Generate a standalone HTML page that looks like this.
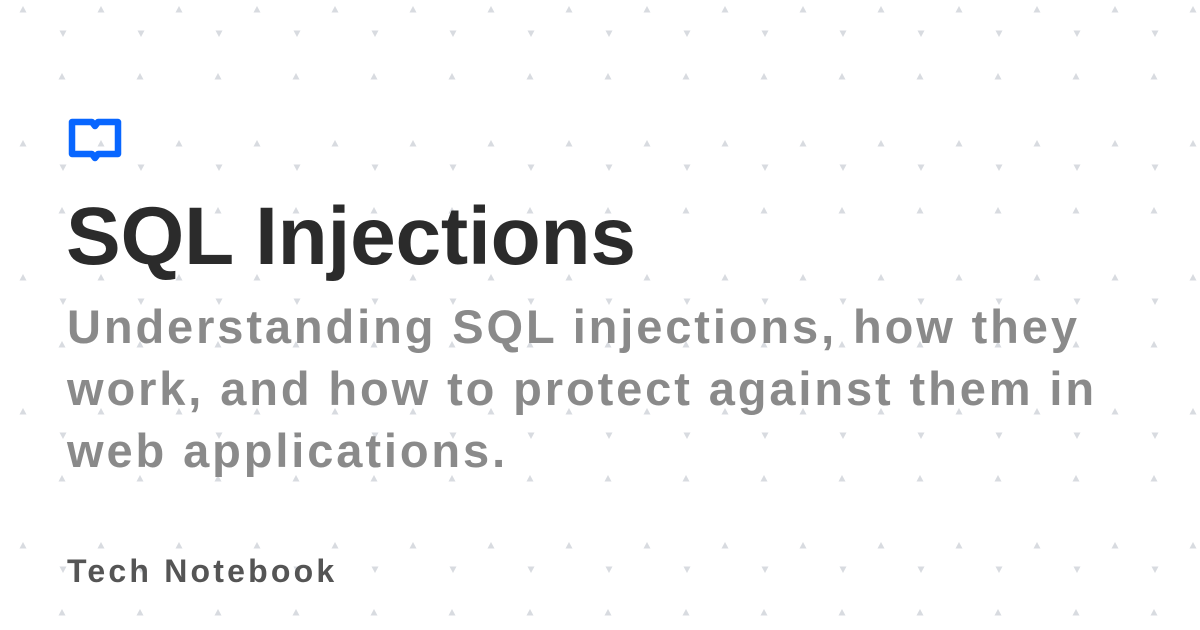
<!DOCTYPE html>
<html><head><meta charset="utf-8"><style>
html,body{margin:0;padding:0;}
body{width:1200px;height:630px;position:relative;overflow:hidden;background:#fff;font-family:"Liberation Sans",sans-serif;font-weight:bold;}
svg.bg{position:absolute;left:0;top:0;}
.t{position:absolute;white-space:nowrap;}
#title{left:66px;top:190px;font-size:82px;line-height:94px;color:#2b2b2b;letter-spacing:-0.2px;}
.sub{left:67px;font-size:47px;color:#8a8a8a;letter-spacing:2.9px;}
#foot{left:67px;top:553px;font-size:32px;color:#555;letter-spacing:3.2px;}
</style></head><body>
<svg class="bg" width="1200" height="630">
<defs><pattern id="p" x="0" y="0" width="78" height="134" patternUnits="userSpaceOnUse">
<path d="M19.5 12.5 L23 6 L26.5 12.5 Z M58.5 79.5 L62 73 L65.5 79.5 Z M59.5 30.5 L66.5 30.5 L63 37 Z M98.5 97.5 L105.5 97.5 L102 104 Z M-18.5 97.5 L-11.5 97.5 L-15 104 Z" fill="#d8dbe0"/>
</pattern></defs>
<rect width="1200" height="630" fill="url(#p)"/>
<path d="M72 122 H92 L95 126 L98 122 H118 V154 H98 L95 158 L92 154 H72 Z" fill="none" stroke="#0866ff" stroke-width="6.5" stroke-linejoin="round"/>
</svg>
<div class="t" id="title">SQL Injections</div>
<div class="t sub" style="top:299px">Understanding SQL injections, how they</div>
<div class="t sub" style="top:361px">work, and how to protect against them in</div>
<div class="t sub" style="top:423px">web applications.</div>
<div class="t" id="foot">Tech Notebook</div>
</body></html>
